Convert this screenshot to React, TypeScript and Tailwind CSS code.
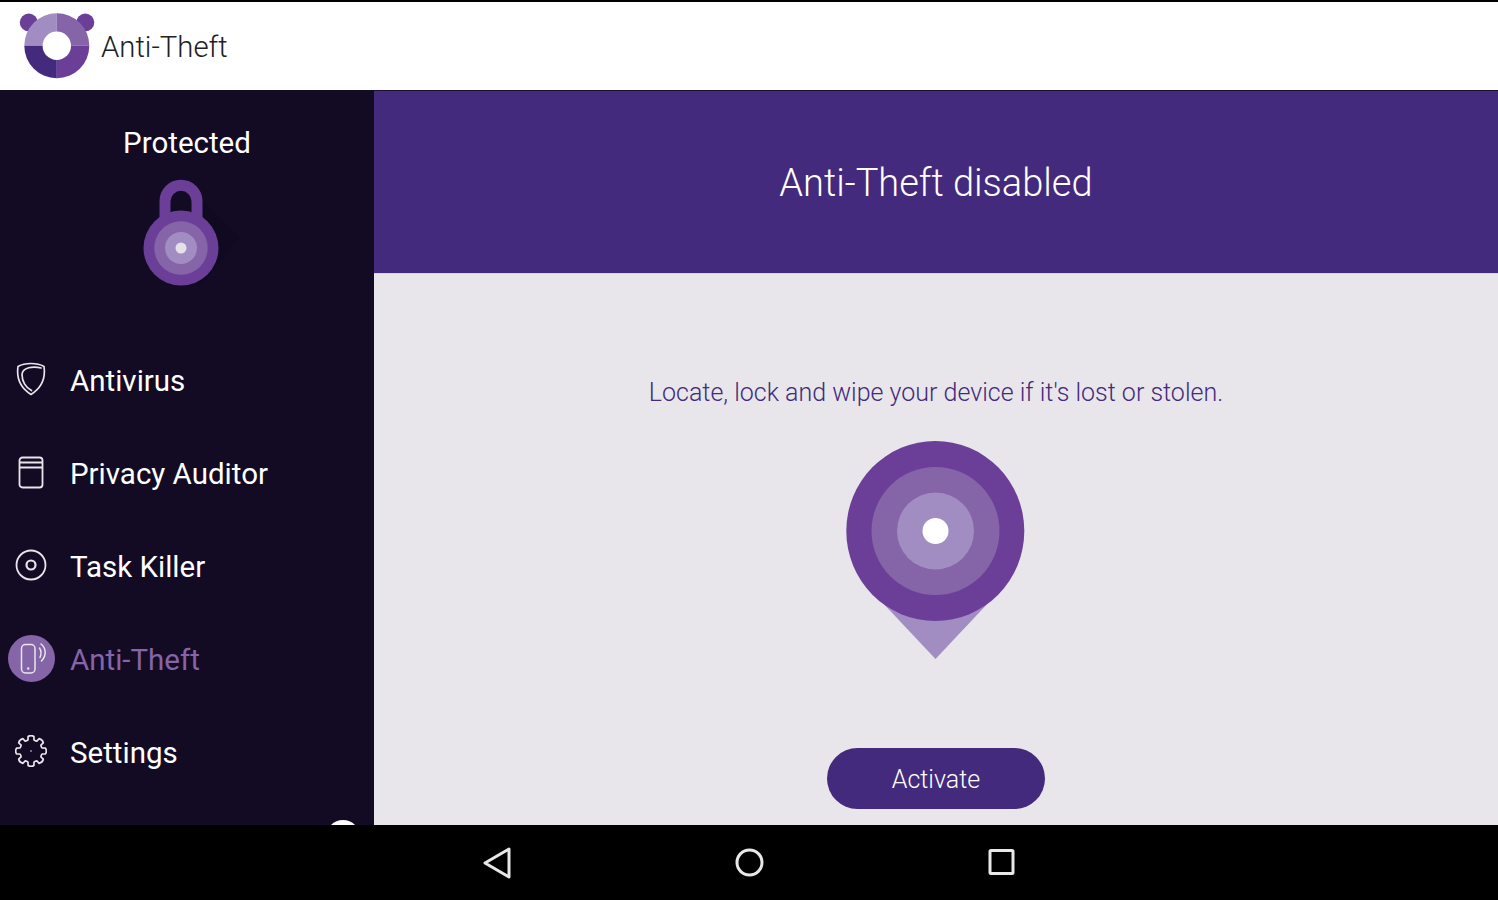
import type { ReactNode } from 'react';

function Logo() {
  return (
    <svg width="76" height="68" viewBox="0 0 76 68" className="shrink-0">
      <circle cx="9.800" cy="10.500" r="9" fill="#6b3f98" />
      <circle cx="66.300" cy="10.500" r="9" fill="#6b3f98" />
      <path d="M37.800 33.800 V1.300 A32.500 32.500 0 0 0 5.300 33.800 Z" fill="#a28dc2" />
      <path d="M37.800 33.800 V1.300 A32.500 32.500 0 0 1 70.300 33.800 Z" fill="#8564a8" />
      <path d="M37.800 33.800 H5.300 A32.500 32.500 0 0 0 37.800 66.300 Z" fill="#432a7c" />
      <path d="M37.800 33.800 H70.300 A32.500 32.500 0 0 1 37.800 66.300 Z" fill="#6b3f98" />
      <circle cx="37.800" cy="33.800" r="14.200" fill="#ffffff" />
    </svg>
  );
}

function LockBadge() {
  return (
    <svg width="90" height="120" viewBox="0 0 90 120" className="overflow-visible">
      <path d="M66 33 L104 70 L64 120 L45 100 Z" fill="#0f0a20" />
      <path d="M29 52 V34.300 A16 16 0 0 1 61 34.300 V52" fill="none" stroke="#6b3f98" strokeWidth="11" />
      <circle cx="45" cy="81" r="37.500" fill="#6b3f98" />
      <circle cx="45" cy="81" r="26.700" fill="#8564a8" />
      <circle cx="45" cy="81" r="16" fill="#a28dc2" />
      <circle cx="45" cy="81" r="5.500" fill="#e4e2e8" />
    </svg>
  );
}

function ShieldIcon() {
  return (
    <svg width="30" height="34" viewBox="0 0 30 34" fill="none" stroke="#e8e6eb" strokeWidth="1.700" strokeLinejoin="round">
      <path d="M15 1.500 C20 1.500 24.500 2.500 28 4.500 C29.500 15 27 25 15 32.500 C3 25 0.500 15 2 4.500 C5.500 2.500 10 1.500 15 1.500 Z" />
      <path d="M25 6 C17 3.800 6.500 5.500 6 12.500 C6 19 9.500 25.500 15.500 28.500" strokeLinecap="round" />
    </svg>
  );
}

function AuditorIcon() {
  return (
    <svg width="26" height="33" viewBox="0 0 26 33" fill="none" stroke="#e8e6eb" strokeWidth="1.800">
      <rect x="1.500" y="1.500" width="23" height="30" rx="3" />
      <path d="M1.500 6.500 H24.500 M1.500 11.500 H24.500" />
    </svg>
  );
}

function KillerIcon() {
  return (
    <svg width="32" height="32" viewBox="0 0 32 32" fill="none" stroke="#e8e6eb" strokeWidth="1.800">
      <circle cx="16" cy="16" r="14.500" />
      <circle cx="16" cy="16" r="4.500" strokeWidth="2.200" />
    </svg>
  );
}

function PhoneIcon() {
  return (
    <span className="flex h-[47px] w-[47px] items-center justify-center rounded-full bg-[#8564a8]">
      <svg width="47" height="47" viewBox="0 0 47 47" fill="none" stroke="#e8e6eb" strokeWidth="1.500" strokeLinecap="round">
        <rect x="13.500" y="9.500" width="13.500" height="28.500" rx="4" />
        <circle cx="20.200" cy="33.500" r="1.200" fill="#e8e6eb" stroke="none" />
        <path d="M31.500 13 C33.500 16 33.500 19 32 22.500" />
        <path d="M33 9 C38 13 39 20 33.500 26" />
      </svg>
    </span>
  );
}

function GearIcon() {
  // eight rounded teeth around an open centre
  const teeth = Array.from({ length: 8 }, (_, i) => {
    const step = (Math.PI * 2) / 8;
    const a = i * step - Math.PI / 2;
    const pt = (r: number, t: number) =>
      `${(16 + r * Math.cos(t)).toFixed(1)} ${(16 + r * Math.sin(t)).toFixed(1)}`;
    return `${i === 0 ? 'M' : 'L'}${pt(11.5, a - 0.26)} L${pt(14.8, a - 0.2)} Q${pt(16.2, a)} ${pt(14.8, a + 0.2)} L${pt(11.5, a + 0.26)} Q${pt(10.8, a + step / 2)} ${pt(11.5, a + step - 0.26)}`;
  }).join(' ');
  return (
    <svg width="32" height="32" viewBox="0 0 32 32" fill="none" stroke="#e8e6eb" strokeWidth="1.700" strokeLinejoin="round">
      <path d={`${teeth} Z`} />
      <circle cx="16" cy="16" r="0.800" fill="#e8e6eb" stroke="none" />
    </svg>
  );
}

function NavItem({ icon, label, active }: { icon: ReactNode; label: string; active?: boolean }) {
  return (
    <div className="flex h-[93px] items-center">
      <div className="-mt-[3px] flex w-[62px] justify-center">{icon}</div>
      <span className={`ml-2 pt-[2px] text-[29.500px] ${active ? 'text-[#8564a8]' : 'text-white'}`}>{label}</span>
    </div>
  );
}

function MapPin() {
  return (
    <svg width="180" height="220" viewBox="0 0 180 220">
      <path d="M34 160 L89.500 219 L145 160 Z" fill="#a28dc2" />
      <ellipse cx="89.300" cy="91" rx="89" ry="90" fill="#6b3f98" />
      <circle cx="89.500" cy="91" r="64" fill="#8564a8" />
      <circle cx="89.500" cy="91" r="38.500" fill="#a28dc2" />
      <circle cx="89.500" cy="91" r="13" fill="#ffffff" />
    </svg>
  );
}

export default function App() {
  return (
    <div className="flex h-[900px] w-[1498px] flex-col overflow-hidden bg-black font-['Roboto',sans-serif]">
      {/* Action bar */}
      <header className="mt-[2px] flex h-[88px] shrink-0 items-center bg-white pl-[19px]">
        <Logo />
        <span className="ml-[6px] pt-[4px] text-[29.300px] font-light text-[#212121]">Anti-Theft</span>
      </header>

      <div className="flex h-[735px] shrink-0">
        {/* Sidebar */}
        <aside className="relative w-[374px] shrink-0 overflow-hidden bg-[#130b24]">
          <div className="flex h-[244px] flex-col items-center pt-[33px]">
            <span className="text-[29.500px] leading-[40px] text-white">Protected</span>
            <div className="mt-[4px] -ml-[13px]">
              <LockBadge />
            </div>
          </div>
          <nav>
            <NavItem icon={<ShieldIcon />} label="Antivirus" />
            <NavItem icon={<AuditorIcon />} label="Privacy Auditor" />
            <NavItem icon={<KillerIcon />} label="Task Killer" />
            <NavItem icon={<PhoneIcon />} label="Anti-Theft" active />
            <NavItem icon={<GearIcon />} label="Settings" />
          </nav>
          <div className="absolute left-[326px] top-[730px] h-[34px] w-[34px] rounded-full bg-white" />
        </aside>

        {/* Main panel */}
        <main className="flex flex-1 flex-col bg-[#e8e6eb]">
          <div className="flex h-[184px] items-center justify-center border-t border-b border-t-[#1d1038] border-b-[#d6d2de] bg-[#432a7c] pt-[2px]">
            <h1 className="text-[38px] font-light text-white">Anti-Theft disabled</h1>
          </div>
          <div className="flex flex-1 flex-col items-center pt-[101px]">
            <p className="text-[25px] leading-[36px] font-light text-[#432a7c]">
              Locate, lock and wipe your device if it's lost or stolen.
            </p>
            <div className="mt-[29px]">
              <MapPin />
            </div>
            <button className="mt-[88px] h-[61px] w-[218px] shrink-0 rounded-full bg-[#432a7c] pt-[2px] text-[25px] font-light text-white">
              Activate
            </button>
          </div>
        </main>
      </div>

      {/* System navigation */}
      <footer className="flex h-[75px] shrink-0 items-center justify-center gap-[200px] bg-black">
        <svg width="53" height="32" viewBox="0 0 53 32" fill="none" stroke="#e8e8e8" strokeWidth="3" strokeLinejoin="round">
          <path d="M39 2 L15 16 L39 30 Z" />
        </svg>
        <svg width="53" height="30" viewBox="0 0 53 30" fill="none" stroke="#e8e8e8" strokeWidth="3">
          <circle cx="26.500" cy="14.500" r="12.500" />
        </svg>
        <svg width="53" height="30" viewBox="0 0 53 30" fill="none" stroke="#e8e8e8" strokeWidth="3" strokeLinejoin="round">
          <rect x="14" y="2.500" width="23" height="23" rx="1" />
        </svg>
      </footer>
    </div>
  );
}
